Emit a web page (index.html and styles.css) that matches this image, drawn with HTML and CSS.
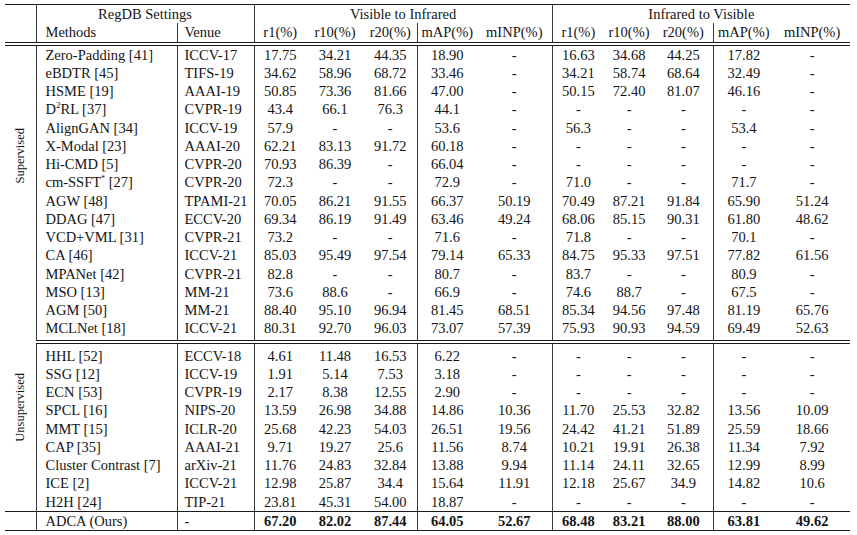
FILE: index.html
```html
<!DOCTYPE html>
<html>
<head>
<meta charset="utf-8">
<link rel="stylesheet" href="styles.css">
</head>
<body>
<table class="tbl">
<colgroup>
<col class="c0"><col class="cm"><col class="cv">
<col class="a1"><col class="a2"><col class="a3"><col class="a4"><col class="a5">
<col class="b1"><col class="b2"><col class="b3"><col class="b4"><col class="b5">
</colgroup>
<thead>
<tr class="h1">
<th class="br hb" rowspan="2"></th>
<th class="br" colspan="2">RegDB Settings</th>
<th class="br" colspan="5">Visible to Infrared</th>
<th colspan="5">Infrared to Visible</th>
</tr>
<tr class="h2">
<th class="br meth">Methods</th><th class="br ven">Venue</th>
<th>r1(%)</th><th>r10(%)</th><th class="br">r20(%)</th><th>mAP(%)</th><th class="br">mINP(%)</th>
<th>r1(%)</th><th>r10(%)</th><th class="br">r20(%)</th><th>mAP(%)</th><th>mINP(%)</th>
</tr>
</thead>
<tbody class="sup">
<tr><td class="br lab" rowspan="16"><span class="vlabel sl">Supervised</span></td><td class="br meth">Zero-Padding [41]</td><td class="br ven">ICCV-17</td><td>17.75</td><td>34.21</td><td class="br">44.35</td><td>18.90</td><td class="br">-</td><td>16.63</td><td>34.68</td><td class="br">44.25</td><td>17.82</td><td>-</td></tr>
<tr><td class="br meth">eBDTR [45]</td><td class="br ven">TIFS-19</td><td>34.62</td><td>58.96</td><td class="br">68.72</td><td>33.46</td><td class="br">-</td><td>34.21</td><td>58.74</td><td class="br">68.64</td><td>32.49</td><td>-</td></tr>
<tr><td class="br meth">HSME [19]</td><td class="br ven">AAAI-19</td><td>50.85</td><td>73.36</td><td class="br">81.66</td><td>47.00</td><td class="br">-</td><td>50.15</td><td>72.40</td><td class="br">81.07</td><td>46.16</td><td>-</td></tr>
<tr><td class="br meth">D<sup>2</sup>RL [37]</td><td class="br ven">CVPR-19</td><td>43.4</td><td>66.1</td><td class="br">76.3</td><td>44.1</td><td class="br">-</td><td>-</td><td>-</td><td class="br">-</td><td>-</td><td>-</td></tr>
<tr><td class="br meth">AlignGAN [34]</td><td class="br ven">ICCV-19</td><td>57.9</td><td>-</td><td class="br">-</td><td>53.6</td><td class="br">-</td><td>56.3</td><td>-</td><td class="br">-</td><td>53.4</td><td>-</td></tr>
<tr><td class="br meth">X-Modal [23]</td><td class="br ven">AAAI-20</td><td>62.21</td><td>83.13</td><td class="br">91.72</td><td>60.18</td><td class="br">-</td><td>-</td><td>-</td><td class="br">-</td><td>-</td><td>-</td></tr>
<tr><td class="br meth">Hi-CMD [5]</td><td class="br ven">CVPR-20</td><td>70.93</td><td>86.39</td><td class="br">-</td><td>66.04</td><td class="br">-</td><td>-</td><td>-</td><td class="br">-</td><td>-</td><td>-</td></tr>
<tr><td class="br meth">cm-SSFT<sup class="ast">*</sup> [27]</td><td class="br ven">CVPR-20</td><td>72.3</td><td>-</td><td class="br">-</td><td>72.9</td><td class="br">-</td><td>71.0</td><td>-</td><td class="br">-</td><td>71.7</td><td>-</td></tr>
<tr><td class="br meth">AGW [48]</td><td class="br ven">TPAMI-21</td><td>70.05</td><td>86.21</td><td class="br">91.55</td><td>66.37</td><td class="br">50.19</td><td>70.49</td><td>87.21</td><td class="br">91.84</td><td>65.90</td><td>51.24</td></tr>
<tr><td class="br meth">DDAG [47]</td><td class="br ven">ECCV-20</td><td>69.34</td><td>86.19</td><td class="br">91.49</td><td>63.46</td><td class="br">49.24</td><td>68.06</td><td>85.15</td><td class="br">90.31</td><td>61.80</td><td>48.62</td></tr>
<tr><td class="br meth">VCD+VML [31]</td><td class="br ven">CVPR-21</td><td>73.2</td><td>-</td><td class="br">-</td><td>71.6</td><td class="br">-</td><td>71.8</td><td>-</td><td class="br">-</td><td>70.1</td><td>-</td></tr>
<tr><td class="br meth">CA [46]</td><td class="br ven">ICCV-21</td><td>85.03</td><td>95.49</td><td class="br">97.54</td><td>79.14</td><td class="br">65.33</td><td>84.75</td><td>95.33</td><td class="br">97.51</td><td>77.82</td><td>61.56</td></tr>
<tr><td class="br meth">MPANet [42]</td><td class="br ven">CVPR-21</td><td>82.8</td><td>-</td><td class="br">-</td><td>80.7</td><td class="br">-</td><td>83.7</td><td>-</td><td class="br">-</td><td>80.9</td><td>-</td></tr>
<tr><td class="br meth">MSO [13]</td><td class="br ven">MM-21</td><td>73.6</td><td>88.6</td><td class="br">-</td><td>66.9</td><td class="br">-</td><td>74.6</td><td>88.7</td><td class="br">-</td><td>67.5</td><td>-</td></tr>
<tr><td class="br meth">AGM [50]</td><td class="br ven">MM-21</td><td>88.40</td><td>95.10</td><td class="br">96.94</td><td>81.45</td><td class="br">68.51</td><td>85.34</td><td>94.56</td><td class="br">97.48</td><td>81.19</td><td>65.76</td></tr>
<tr class="last"><td class="br meth">MCLNet [18]</td><td class="br ven">ICCV-21</td><td>80.31</td><td>92.70</td><td class="br">96.03</td><td>73.07</td><td class="br">57.39</td><td>75.93</td><td>90.93</td><td class="br">94.59</td><td>69.49</td><td>52.63</td></tr>
</tbody>
<tbody class="uns">
<tr class="first"><td class="br lab" rowspan="9"><span class="vlabel ul">Unsupervised</span></td><td class="br meth">HHL [52]</td><td class="br ven">ECCV-18</td><td>4.61</td><td>11.48</td><td class="br">16.53</td><td>6.22</td><td class="br">-</td><td>-</td><td>-</td><td class="br">-</td><td>-</td><td>-</td></tr>
<tr><td class="br meth">SSG [12]</td><td class="br ven">ICCV-19</td><td>1.91</td><td>5.14</td><td class="br">7.53</td><td>3.18</td><td class="br">-</td><td>-</td><td>-</td><td class="br">-</td><td>-</td><td>-</td></tr>
<tr><td class="br meth">ECN [53]</td><td class="br ven">CVPR-19</td><td>2.17</td><td>8.38</td><td class="br">12.55</td><td>2.90</td><td class="br">-</td><td>-</td><td>-</td><td class="br">-</td><td>-</td><td>-</td></tr>
<tr><td class="br meth">SPCL [16]</td><td class="br ven">NIPS-20</td><td>13.59</td><td>26.98</td><td class="br">34.88</td><td>14.86</td><td class="br">10.36</td><td>11.70</td><td>25.53</td><td class="br">32.82</td><td>13.56</td><td>10.09</td></tr>
<tr><td class="br meth">MMT [15]</td><td class="br ven">ICLR-20</td><td>25.68</td><td>42.23</td><td class="br">54.03</td><td>26.51</td><td class="br">19.56</td><td>24.42</td><td>41.21</td><td class="br">51.89</td><td>25.59</td><td>18.66</td></tr>
<tr><td class="br meth">CAP [35]</td><td class="br ven">AAAI-21</td><td>9.71</td><td>19.27</td><td class="br">25.6</td><td>11.56</td><td class="br">8.74</td><td>10.21</td><td>19.91</td><td class="br">26.38</td><td>11.34</td><td>7.92</td></tr>
<tr><td class="br meth">Cluster Contrast [7]</td><td class="br ven">arXiv-21</td><td>11.76</td><td>24.83</td><td class="br">32.84</td><td>13.88</td><td class="br">9.94</td><td>11.14</td><td>24.11</td><td class="br">32.65</td><td>12.99</td><td>8.99</td></tr>
<tr><td class="br meth">ICE [2]</td><td class="br ven">ICCV-21</td><td>12.98</td><td>25.87</td><td class="br">34.4</td><td>15.64</td><td class="br">11.91</td><td>12.18</td><td>25.67</td><td class="br">34.9</td><td>14.82</td><td>10.6</td></tr>
<tr><td class="br meth">H2H [24]</td><td class="br ven">TIP-21</td><td>23.81</td><td>45.31</td><td class="br">54.00</td><td>18.87</td><td class="br">-</td><td>-</td><td>-</td><td class="br">-</td><td>-</td><td>-</td></tr>
</tbody>
<tbody class="ours">
<tr><td class="br"></td><td class="br meth">ADCA (Ours)</td><td class="br ven">-</td><td class="b">67.20</td><td class="b">82.02</td><td class="br b">87.44</td><td class="b">64.05</td><td class="br b">52.67</td><td class="b">68.48</td><td class="b">83.21</td><td class="br b">88.00</td><td class="b">63.81</td><td class="b">49.62</td></tr>
</tbody>
</table>
</body>
</html>
```

FILE: styles.css
```css
html, body {
  margin: 0;
  padding: 0;
  background: #ffffff;
  font-family: "Liberation Serif", "DejaVu Serif", serif;
}

.tbl {
  border-collapse: collapse;
  table-layout: fixed;
  width: 845px;
  margin: 4px 0 0 5px;
  font-family: "Liberation Serif", "DejaVu Serif", serif;
  font-size: 14.5px;
  color: #141414;
}

.c0 { width: 31px; }
.cm { width: 141px; }
.cv { width: 77px; }
.a1 { width: 52px; }
.a2 { width: 58px; }
.a3 { width: 53px; }
.a4 { width: 60px; }
.a5 { width: 75px; }
.b1 { width: 52px; }
.b2 { width: 50px; }
.b3 { width: 59px; }
.b4 { width: 61px; }
.b5 { width: 76px; }

.tbl th,
.tbl td {
  font-family: "Liberation Serif", "DejaVu Serif", serif;
  padding: 0;
  height: 18.25px;
  line-height: 18px;
  text-align: center;
  font-weight: normal;
  white-space: nowrap;
  vertical-align: middle;
}

.tbl .br { border-right: 1px solid #3a3a3a; }

.h1 th { border-top: 1px solid #1a1a1a; }
.h2 th,
.tbl th.hb { border-bottom: 4px double #1a1a1a; }

.tbl .meth { text-align: left; padding-left: 9px; }
.tbl .ven { text-align: left; padding-left: 7px; }

.tbl td.lab {
  vertical-align: top;
  text-align: center;
  padding-top: 0;
}

.vlabel {
  display: inline-block;
  writing-mode: vertical-rl;
  transform: rotate(180deg);
  line-height: 14px;
  font-size: 12.5px;
}

.sl { margin-top: 82px; }
.ul { margin-top: 31px; }

sup {
  font-size: 9px;
  line-height: 0;
  vertical-align: 6px;
}
sup.ast { font-size: 8px; }

.last td { border-bottom: 4px double #1a1a1a; padding-bottom: 2px; }
.first td { padding-top: 3px; }

.ours td {
  border-top: 1px solid #1a1a1a;
  border-bottom: 1px solid #1a1a1a;
}
.tbl td.b { font-weight: bold; }
```
